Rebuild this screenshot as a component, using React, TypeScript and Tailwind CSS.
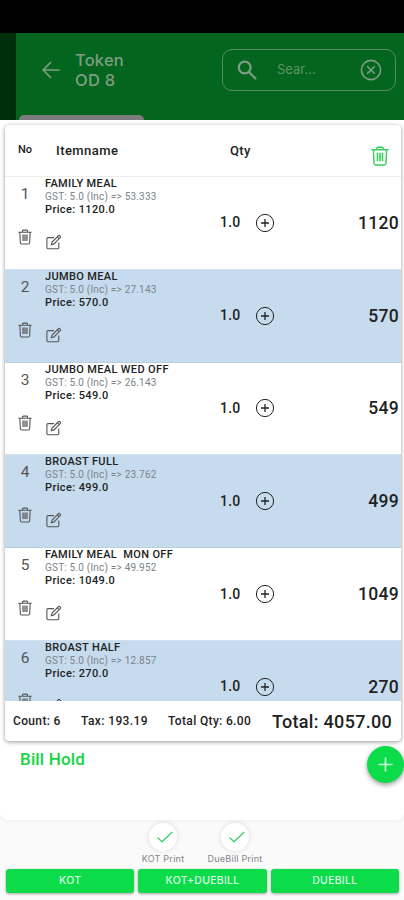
import { ReactNode } from "react";

type Item = {
  name: string;
  gst: string;
  price: string;
  qty: string;
  total: string;
};

const items: Item[] = [
  { name: "FAMILY MEAL", gst: "53.333", price: "1120.0", qty: "1.0", total: "1120" },
  { name: "JUMBO MEAL", gst: "27.143", price: "570.0", qty: "1.0", total: "570" },
  { name: "JUMBO MEAL WED OFF", gst: "26.143", price: "549.0", qty: "1.0", total: "549" },
  { name: "BROAST FULL", gst: "23.762", price: "499.0", qty: "1.0", total: "499" },
  { name: "FAMILY MEAL  MON OFF", gst: "49.952", price: "1049.0", qty: "1.0", total: "1049" },
  { name: "BROAST HALF", gst: "12.857", price: "270.0", qty: "1.0", total: "270" },
];

function TrashIcon({ className }: { className: string }) {
  return (
    <svg viewBox="0 0 18 20" className={className} fill="none" stroke="currentColor" strokeWidth="1.4">
      <path d="M0.500 3.800h17M5.800 3.800V2.400q0-1.200 1.200-1.200h4q1.200 0 1.200 1.200v1.400M2.400 4l.6 13.500q.1 1.500 1.600 1.500h8.800q1.500 0 1.600-1.500L15.600 4" />
      <path d="M6.500 6.800v8.400M9 6.800v8.400M11.500 6.800v8.400" strokeWidth="1.600" />
    </svg>
  );
}

function EditIcon() {
  return (
    <svg viewBox="0 0 16 16" className="h-4 w-4" fill="none" stroke="currentColor" strokeWidth="1.1">
      <path d="M8 3.600H2Q0.900 3.600 0.900 4.800V13.600Q0.900 14.800 2 14.800h9.600Q12.800 14.800 12.800 13.600V8.600" />
      <path d="M5.300 10.700l.8-2.700L12.600 1.500q.5-.4 1 0l.8.8q.5.500 0 1L8 9.900zM11.300 2.800l1.900 1.900" />
    </svg>
  );
}

function PlusCircle() {
  return (
    <svg viewBox="0 0 20 20" className="h-5 w-5" fill="none" stroke="currentColor">
      <circle cx="10" cy="10" r="8.6" strokeWidth="1" />
      <path d="M10 6v8M6 10h8" strokeWidth="1.3" />
    </svg>
  );
}

function Header() {
  return (
    <header className="flex h-[87px] bg-[#002f0d]">
      <div className="ml-4 flex flex-1 flex-col bg-[#04651f] text-[#7f9d84]">
        <div className="flex h-[74px] items-center pr-[8px] pl-[26px]">
          <svg viewBox="0 0 18 18" className="h-[18px] w-[18px]" fill="none" stroke="currentColor" strokeWidth="1.7">
            <path d="M17.5 9H1.500M9 1L1.200 9L9 17" />
          </svg>
          <div className="ml-[15px] flex-1 font-['Inter',sans-serif] text-[16.5px] leading-[20px] font-medium">
            <div className="tracking-[0.2px]">Token</div>
            <div className="tracking-[0.3px]">OD 8</div>
          </div>
          <div className="flex h-[42px] w-[174px] items-center rounded-[10px] border border-[#5c8b63] pr-[13px] pl-[14px]">
            <svg viewBox="0 0 20 20" className="h-5 w-5" fill="none" stroke="currentColor" strokeWidth="2.2">
              <circle cx="7.7" cy="7.5" r="5.9" />
              <path d="M12 12l7 7" />
            </svg>
            <span className="ml-[20px] flex-1 font-['Inter',sans-serif] text-[13px] text-[#5d9367]">Sear...</span>
            <svg viewBox="0 0 22 22" className="h-[22px] w-[22px]" fill="none" stroke="currentColor" strokeWidth="1.6">
              <circle cx="11" cy="11" r="9.6" />
              <path d="M7.200 7.200l7.600 7.600M14.800 7.200l-7.600 7.600" />
            </svg>
          </div>
        </div>
        <div className="mt-auto ml-[3px] h-[5px] w-[125px] rounded-t-[7px] bg-[#7c7c7c]" />
      </div>
    </header>
  );
}

function ItemRow({ item, index }: { item: Item; index: number }) {
  return (
    <div
      className={`flex h-[92.8px] shrink-0 border-b text-[#222] ${
        index % 2 ? "border-[#b9cede] bg-[#c6dbee]" : "border-[#d3e1ee] bg-white"
      }`}
    >
      <div className="flex w-10 flex-col items-center pt-[7px] text-[#555]">
        <span className="text-[15.5px] leading-[20px]">{index + 1}</span>
        <TrashIcon className="mt-[25px] h-[16px] w-[14px]" />
      </div>
      <div className="flex-1 whitespace-pre">
        <div className="text-[11px] leading-[13px] font-medium tracking-[0.35px]">{item.name}</div>
        <div className="text-[10px] leading-[13px] tracking-[0.2px] text-[#7c8389]">GST: 5.0 (Inc) =&gt; {item.gst}</div>
        <div className="text-[11px] leading-[13px] font-medium tracking-[0.38px]">Price: {item.price}</div>
        <div className="mt-[18px] pl-px text-[#555]">
          <EditIcon />
        </div>
      </div>
      <div className="flex items-center">
        <span className="w-[35px] text-[14px] font-medium tracking-[0.2px]">{item.qty}</span>
        <PlusCircle />
        <span className="w-[126px] pr-[2px] text-right text-[17.5px] font-medium tracking-[0.3px]">
          {item.total}
        </span>
      </div>
    </div>
  );
}

function BillCard() {
  return (
    <section className="mr-[3px] ml-[5px] flex h-[616px] flex-col overflow-hidden rounded-[4px] bg-white shadow-[0_1px_4px_rgba(0,0,0,0.4)]">
      <div className="flex h-[52px] shrink-0 items-center border-b border-[#ececec] text-[#222]">
        <span className="w-[51px] pl-[13px] text-[11px] font-medium">No</span>
        <span className="w-[174px] text-[13px] font-medium tracking-[0.45px]">Itemname</span>
        <span className="flex-1 text-[13px] font-medium tracking-[0.3px]">Qty</span>
        <TrashIcon className="mt-[11px] mr-[12px] h-[20px] w-[18px] text-[#35cf5c]" />
      </div>
      <div className="flex h-[524px] flex-col overflow-hidden">
        {items.map((item, i) => (
          <ItemRow key={item.name} item={item} index={i} />
        ))}
      </div>
      <div className="flex h-10 shrink-0 items-center pl-[8px] whitespace-nowrap text-[12px] font-medium text-[#222]">
        <span className="w-[68px] tracking-[0.35px]">Count: 6</span>
        <span className="w-[87px] tracking-[0.4px]">Tax: 193.19</span>
        <span className="w-[104px] tracking-[0.35px]">Total Qty: 6.00</span>
        <span className="text-[18px] tracking-[0.3px]">Total: 4057.00</span>
      </div>
    </section>
  );
}

function PrintOption({ children }: { children: ReactNode }) {
  return (
    <div className="flex w-[72px] flex-col items-center">
      <div className="flex h-7 w-7 items-center justify-center rounded-full bg-white shadow-[0_0_5px_rgba(0,0,0,0.13)]">
        <svg viewBox="0 0 16 12" className="ml-[3px] h-3 w-4" fill="none" stroke="#38cf68" strokeWidth="1.2">
          <path d="M0.600 6.500L5 10.800L15.300 1" />
        </svg>
      </div>
      <span className="mt-px text-[9px] leading-[13px] tracking-[0.25px] whitespace-nowrap text-[#858585]">
        {children}
      </span>
    </div>
  );
}

function ActionButton({ children }: { children: ReactNode }) {
  return (
    <button className="h-6 flex-1 rounded-[3px] bg-[#0cdc4a] text-[10.5px] font-medium tracking-[0.25px] text-[#d8ffe2] shadow-[0_1px_3px_rgba(0,0,0,0.35)]">
      {children}
    </button>
  );
}

export default function App() {
  return (
    <div className="h-[900px] w-[404px] overflow-hidden bg-[#fafafb] font-['Roboto',sans-serif]">
      <div className="h-[33px] bg-black" />
      <Header />
      <main className="h-[700px] rounded-b-[8px] bg-white pt-[5px] shadow-[0_1px_4px_rgba(40,60,90,0.06)]">
        <BillCard />
        <div className="flex items-start justify-between pt-[5px]">
          <h2 className="mt-[2px] ml-[20px] text-[17px] leading-[22px] font-medium tracking-[0.15px] text-[#12d542]">
            Bill Hold
          </h2>
          <button className="flex h-[37px] w-[37px] items-center justify-center rounded-full bg-[#0cdc4a] shadow-[0_2px_5px_rgba(0,0,0,0.4)]">
            <svg viewBox="0 0 16 16" className="h-[15px] w-[15px]" stroke="#c9ffd8" strokeWidth="1.8">
              <path d="M8 0.500v15M0.500 8h15" />
            </svg>
          </button>
        </div>
      </main>
      <footer className="font-['Inter',sans-serif]">
        <div className="flex h-[48px] pt-[3px] pl-[127px]">
          <PrintOption>KOT Print</PrintOption>
          <PrintOption>DueBill Print</PrintOption>
        </div>
        <div className="flex gap-[4px] pt-px pr-[5px] pl-[6px]">
          <ActionButton>KOT</ActionButton>
          <ActionButton>KOT+DUEBILL</ActionButton>
          <ActionButton>DUEBILL</ActionButton>
        </div>
      </footer>
    </div>
  );
}
